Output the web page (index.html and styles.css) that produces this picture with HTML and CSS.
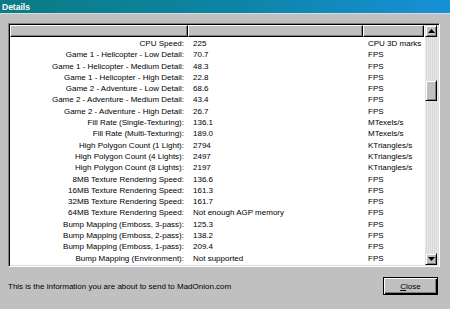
FILE: index.html
```html
<!DOCTYPE html>
<html>
<head>
<meta charset="utf-8">
<link rel="stylesheet" href="styles.css">
</head>
<body>
<div class="window">
  <div class="titlebar"><span class="title">Details</span></div>
  <div class="content">
    <div class="listbox">
      <div class="table">
        <div class="header">
          <div class="hcell"></div>
          <div class="hcell"></div>
          <div class="hcell"></div>
        </div>
        <div class="rows">
          <div class="row"><span class="c1">CPU Speed:</span><span class="c2">225</span><span class="c3">CPU 3D marks</span></div>
          <div class="row"><span class="c1">Game 1 - Helicopter - Low Detail:</span><span class="c2">70.7</span><span class="c3">FPS</span></div>
          <div class="row"><span class="c1">Game 1 - Helicopter - Medium Detail:</span><span class="c2">48.3</span><span class="c3">FPS</span></div>
          <div class="row"><span class="c1">Game 1 - Helicopter - High Detail:</span><span class="c2">22.8</span><span class="c3">FPS</span></div>
          <div class="row"><span class="c1">Game 2 - Adventure - Low Detail:</span><span class="c2">68.6</span><span class="c3">FPS</span></div>
          <div class="row"><span class="c1">Game 2 - Adventure - Medium Detail:</span><span class="c2">43.4</span><span class="c3">FPS</span></div>
          <div class="row"><span class="c1">Game 2 - Adventure - High Detail:</span><span class="c2">26.7</span><span class="c3">FPS</span></div>
          <div class="row"><span class="c1">Fill Rate (Single-Texturing):</span><span class="c2">136.1</span><span class="c3">MTexels/s</span></div>
          <div class="row"><span class="c1">Fill Rate (Multi-Texturing):</span><span class="c2">189.0</span><span class="c3">MTexels/s</span></div>
          <div class="row"><span class="c1">High Polygon Count (1 Light):</span><span class="c2">2794</span><span class="c3">KTriangles/s</span></div>
          <div class="row"><span class="c1">High Polygon Count (4 Lights):</span><span class="c2">2497</span><span class="c3">KTriangles/s</span></div>
          <div class="row"><span class="c1">High Polygon Count (8 Lights):</span><span class="c2">2197</span><span class="c3">KTriangles/s</span></div>
          <div class="row"><span class="c1">8MB Texture Rendering Speed:</span><span class="c2">136.6</span><span class="c3">FPS</span></div>
          <div class="row"><span class="c1">16MB Texture Rendering Speed:</span><span class="c2">161.3</span><span class="c3">FPS</span></div>
          <div class="row"><span class="c1">32MB Texture Rendering Speed:</span><span class="c2">161.7</span><span class="c3">FPS</span></div>
          <div class="row"><span class="c1">64MB Texture Rendering Speed:</span><span class="c2">Not enough AGP memory</span><span class="c3">FPS</span></div>
          <div class="row"><span class="c1">Bump Mapping (Emboss, 3-pass):</span><span class="c2">125.3</span><span class="c3">FPS</span></div>
          <div class="row"><span class="c1">Bump Mapping (Emboss, 2-pass):</span><span class="c2">138.2</span><span class="c3">FPS</span></div>
          <div class="row"><span class="c1">Bump Mapping (Emboss, 1-pass):</span><span class="c2">209.4</span><span class="c3">FPS</span></div>
          <div class="row"><span class="c1">Bump Mapping (Environment):</span><span class="c2">Not supported</span><span class="c3">FPS</span></div>
        </div>
      </div>
      <div class="scrollbar">
        <div class="sbtn"><svg width="7" height="4" viewBox="0 0 7 4"><polygon points="3.5,0 7,4 0,4" fill="#000"/></svg></div>
        <div class="track">
          <div class="thumb"></div>
        </div>
        <div class="sbtn"><svg width="7" height="4" viewBox="0 0 7 4"><polygon points="0,0 7,0 3.5,4" fill="#000"/></svg></div>
      </div>
    </div>
  </div>
  <div class="footer">
    <span class="info">This is the information you are about to send to MadOnion.com</span>
    <div class="button"><span><u>C</u>lose</span></div>
  </div>
</div>
</body>
</html>
```

FILE: styles.css
```css
* { box-sizing: border-box; }
html, body { margin: 0; padding: 0; }
body {
  font-family: "Liberation Sans", Arial, sans-serif;
  font-size: 8px;
  color: #000;
  background: #c0c0c0;
}
.window {
  width: 450px;
  height: 309px;
  background: #c0c0c0;
  display: flex;
  flex-direction: column;
  overflow: hidden;
}
.titlebar {
  height: 14px;
  background: linear-gradient(to right, #0b7b83 0%, #0d85a8 55%, #1890d8 100%);
  display: flex;
  align-items: center;
  padding-left: 2px;
  border-bottom: 1px solid #dcdcdc;
}
.title {
  color: #fff;
  font-weight: bold;
  font-size: 8.5px;
}
.content {
  padding: 9px 10px 0 8px;
}
.listbox {
  width: 432px;
  height: 244px;
  display: flex;
  background: #fff;
  border-top: 1px solid #808080;
  border-left: 1px solid #808080;
  border-right: 1px solid #fff;
  border-bottom: 1px solid #fff;
  box-shadow: inset 1px 1px 0 #000, inset -1px -1px 0 #dfdfdf;
  padding: 1px;
}
.table {
  width: 415px;
  display: flex;
  flex-direction: column;
}
.header {
  display: grid;
  grid-template-columns: 178px 175px 61px;
  height: 12px;
}
.hcell {
  background: #c0c0c0;
  border-top: 1px solid #fff;
  border-left: 1px solid #fff;
  border-right: 1px solid #000;
  border-bottom: 1px solid #000;
  box-shadow: inset -1px -1px 0 #808080;
}
.rows {
  padding-top: 1px;
}
.row {
  display: grid;
  grid-template-columns: 178px 175px 62px;
  height: 11.3px;
  line-height: 11.3px;
  white-space: nowrap;
}
.c1 {
  text-align: right;
  padding-right: 4px;
}
.c2 {
  padding-left: 5px;
}
.c3 {
  padding-left: 5px;
}
.scrollbar {
  width: 13px;
  display: flex;
  flex-direction: column;
  background: #e4e4e4;
}
.sbtn {
  width: 12px;
  height: 12px;
  background: #c0c0c0;
  border-top: 1px solid #dfdfdf;
  border-left: 1px solid #dfdfdf;
  border-right: 1px solid #000;
  border-bottom: 1px solid #000;
  box-shadow: inset 1px 1px 0 #fff, inset -1px -1px 0 #808080;
  display: flex;
  align-items: center;
  justify-content: center;
}
.track {
  flex: 1;
  padding-top: 43px;
  background: repeating-linear-gradient(to right, #e8e8e8 0 1px, #d8d8d8 1px 2px);
}
.thumb {
  width: 12px;
  height: 21px;
  background: #c0c0c0;
  border-top: 1px solid #dfdfdf;
  border-left: 1px solid #dfdfdf;
  border-right: 1px solid #000;
  border-bottom: 1px solid #000;
  box-shadow: inset 1px 1px 0 #fff, inset -1px -1px 0 #808080;
}
.footer {
  margin-top: 10px;
  height: 18px;
  display: flex;
  align-items: center;
  justify-content: space-between;
  padding-left: 8px;
  padding-right: 12px;
}
.info {
  padding-top: 1px;
}
.button {
  width: 55px;
  height: 18px;
  border: 1px solid #000;
  background: #c0c0c0;
  box-shadow: inset 1px 1px 0 #fff, inset -1px -1px 0 #000, inset -2px -2px 0 #808080;
  display: flex;
  align-items: center;
  justify-content: center;
  font-size: 8px;
}
```
